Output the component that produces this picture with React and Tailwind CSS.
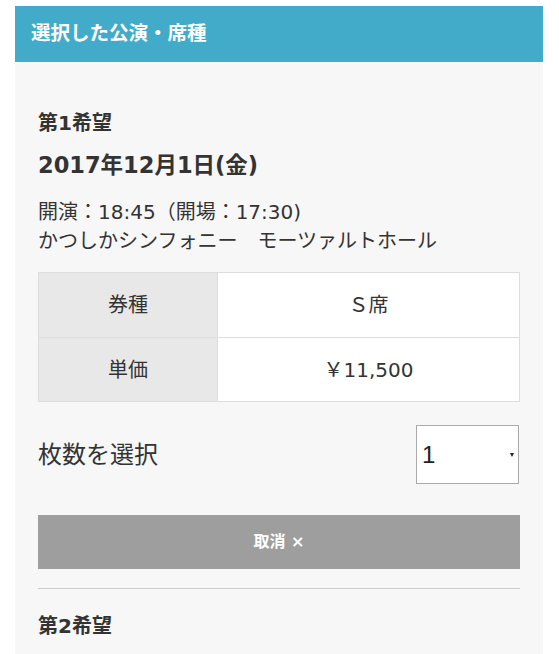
import { useState } from 'react';

const font = { fontFamily: '"DejaVu Sans", "Noto Sans CJK JP", sans-serif' };

const App = () => {
  const [count, setCount] = useState('1');

  return (
    <div className="min-h-screen bg-white pt-[6px] text-[#333]" style={font}>
      <div className="mx-[15px] w-[528px]">
        {/* Header */}
        <div className="h-[56px] bg-[#42abc9] flex items-center pl-[16px]">
          <h2 className="text-[19.5px] font-bold text-white leading-none">選択した公演・席種</h2>
        </div>

        {/* Body */}
        <div className="bg-[#f7f7f7] px-[23px] pt-[46px] pb-[20px]">
          <h3 className="text-[20px] font-bold leading-[30px]">第1希望</h3>
          <p className="mt-[11px] text-[22.5px] font-bold leading-[33px]">2017年12月1日(金)</p>
          <div className="mt-[16px] text-[20px] leading-[29px]">
            <p>開演：18:45（開場：17:30)</p>
            <p>かつしかシンフォニー　モーツァルトホール</p>
          </div>

          {/* Seat table */}
          <table className="mt-[16px] w-full border-collapse text-[20px]">
            <tbody>
              <tr className="h-[65px]">
                <th className="w-[179px] border border-[#ddd] bg-[#e8e8e8] font-normal">券種</th>
                <td className="border border-[#ddd] bg-white text-center">Ｓ席</td>
              </tr>
              <tr className="h-[64px]">
                <th className="w-[179px] border border-[#ddd] bg-[#e8e8e8] font-normal">単価</th>
                <td className="border border-[#ddd] bg-white text-center">￥11,500</td>
              </tr>
            </tbody>
          </table>

          {/* Quantity */}
          <div className="mt-[23px] flex items-center justify-between">
            <span className="text-[24px]">枚数を選択</span>
            <div className="relative w-[103px] h-[59px] mr-[1px]">
              <select
                value={count}
                onChange={(e) => setCount(e.target.value)}
                className="w-full h-full appearance-none bg-white border border-[#aaa] pl-[5px] text-[24px] text-[#222] outline-none"
                style={{ fontFamily: '"Liberation Sans", sans-serif' }}
              >
                {[1, 2, 3, 4].map((n) => (
                  <option key={n} value={n}>{n}</option>
                ))}
              </select>
              <span className="pointer-events-none absolute right-[5px] top-[28px] w-0 h-0 border-x-[2.5px] border-x-transparent border-t-[4px] border-t-[#222]" />
            </div>
          </div>

          {/* Cancel */}
          <button className="mt-[31px] w-full h-[54px] bg-[#9e9e9e] text-white text-[16px] font-bold">
            取消 ×
          </button>

          <div className="mt-[19px] border-t border-[#ccc]" />

          <h3 className="mt-[22px] text-[20px] font-bold leading-[30px]">第2希望</h3>
        </div>
      </div>
    </div>
  );
};

export default App;
